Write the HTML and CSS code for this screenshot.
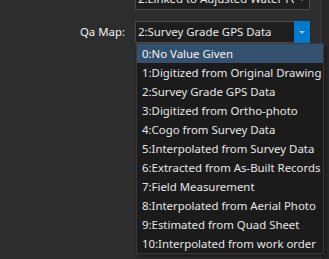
FILE: index.html
```html
<!DOCTYPE html>
<html>
<head>
<meta charset="utf-8">
<link rel="stylesheet" href="styles.css">
</head>
<body>
<div class="frame">
  <div class="form">
    <div class="label first">Qa Point Src:</div>
    <div class="combo">
      <span class="value">2:Linked to Adjusted Water Fe</span>
      <span class="btn"><span class="tri gray"></span></span>
    </div>
    <div class="label">Qa Map:</div>
    <div class="combo open">
      <span class="value">2:Survey Grade GPS Data</span>
      <span class="btn blue"><span class="tri light"></span></span>
      <ul class="list">
        <li class="sel">0:No Value Given</li>
        <li>1:Digitized from Original Drawing</li>
        <li>2:Survey Grade GPS Data</li>
        <li>3:Digitized from Ortho-photo</li>
        <li>4:Cogo from Survey Data</li>
        <li>5:Interpolated from Survey Data</li>
        <li>6:Extracted from As-Built Records</li>
        <li>7:Field Measurement</li>
        <li>8:Interpolated from Aerial Photo</li>
        <li>9:Estimated from Quad Sheet</li>
        <li>10:Interpolated from work order</li>
      </ul>
    </div>
  </div>
  <div class="edge"></div>
</div>
</body>
</html>
```
FILE: styles.css
```css
html, body {
  margin: 0;
  padding: 0;
  width: 329px;
  height: 259px;
  overflow: hidden;
  background: #2d2d2d;
  font-family: "Noto Sans", "Open Sans", sans-serif;
  font-size: 11.4px;
  color: #e8e8e8;
}
.frame {
  display: flex;
  height: 259px;
}
.form {
  flex: 1;
  display: grid;
  grid-template-columns: 125px 175px;
  column-gap: 10px;
  row-gap: 11px;
  align-content: start;
  margin-top: -12px;
}
.label {
  text-align: right;
  line-height: 22px;
  height: 22px;
  color: #f2f2f2;
}
.label.first {
  margin-top: -6px;
}
.combo {
  position: relative;
  height: 22px;
  box-sizing: border-box;
  border: 1px solid #4a4a4a;
  background: #1e1e1e;
  display: flex;
  align-items: center;
}
.value {
  flex: 1;
  padding-left: 2px;
  white-space: nowrap;
  overflow: hidden;
  line-height: 20px;
}
.btn {
  width: 15px;
  height: 20px;
  display: flex;
  align-items: center;
  justify-content: center;
}
.combo.open .btn.blue {
  height: 22px;
  margin: -1px -1px -1px 0;
  width: 16px;
}
.blue {
  background: #007acc;
}
.tri {
  width: 0;
  height: 0;
  border-left: 3px solid transparent;
  border-right: 3px solid transparent;
  border-top: 3px solid #9a9a9a;
}
.tri.light {
  border-top-color: #9cc7ea;
}
.list {
  position: absolute;
  left: 0;
  top: 21px;
  width: 188px;
  margin: 0;
  padding: 0;
  list-style: none;
  background: #1b1b1b;
  border: 1px solid #3a3a3a;
  box-shadow: 2px 3px 3px rgba(0, 0, 0, 0.35);
  box-sizing: border-box;
}
.list li {
  height: 19px;
  line-height: 19px;
  padding-left: 5px;
  white-space: nowrap;
  color: #e6e6e6;
}
.list li.sel {
  background: #34506f;
  color: #f4f4f4;
}
.edge {
  width: 8px;
  border-left: 1px solid #3a3a3a;
  background: #272727;
}
```
